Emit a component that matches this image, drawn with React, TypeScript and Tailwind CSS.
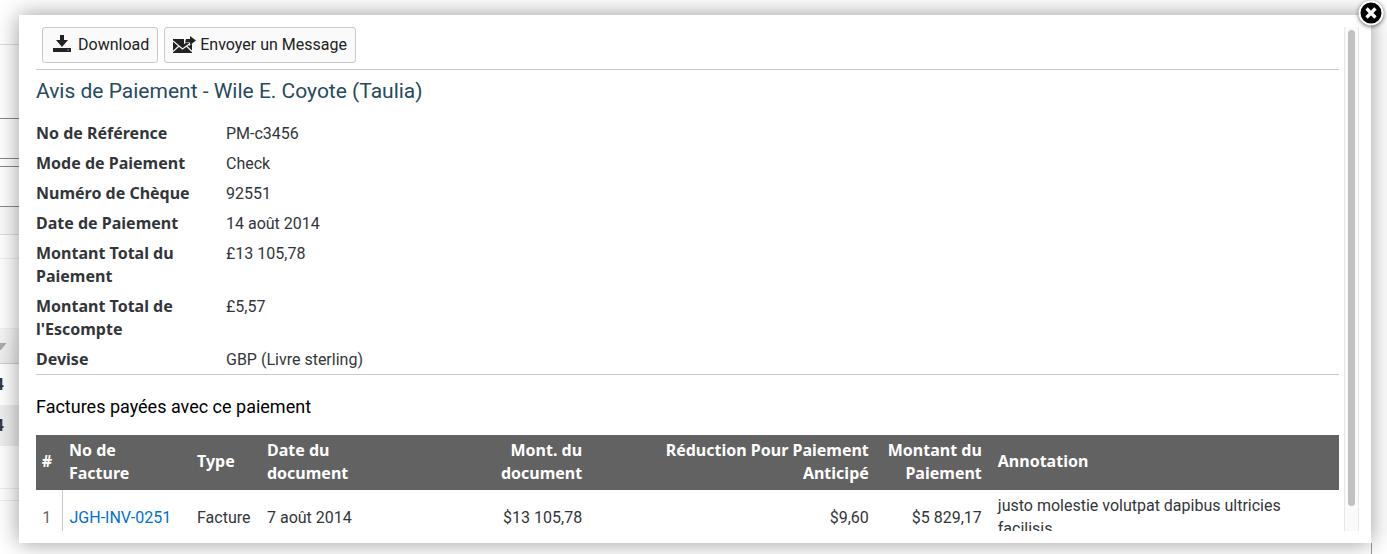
import React from "react";

type Field = { label: string; value: string };

const fields: Field[] = [
  { label: "No de Référence", value: "PM-c3456" },
  { label: "Mode de Paiement", value: "Check" },
  { label: "Numéro de Chèque", value: "92551" },
  { label: "Date de Paiement", value: "14 août 2014" },
  { label: "Montant Total du Paiement", value: "£13 105,78" },
  { label: "Montant Total de l'Escompte", value: "£5,57" },
  { label: "Devise", value: "GBP (Livre sterling)" },
];

function DownloadIcon() {
  return (
    <svg viewBox="0 0 24 18" className="h-[18px] w-6" fill="#222" aria-hidden="true">
      <path d="M9 0h4v5h4l-6 7-6-7h4z" />
      <path d="M2 13h18v4H2z" />
      <path d="M16 14.500h2v1h-2z" fill="#888" />
    </svg>
  );
}

function SendMailIcon() {
  return (
    <svg viewBox="0 0 24 18" className="h-[18px] w-6" aria-hidden="true">
      <path d="M0 4h19v14H0z" fill="#222" />
      <path d="M0 6 9.500 14 17 8.500M0 16.500 6 11M19 16.500 13.500 11" fill="none" stroke="#fafafa" strokeWidth="1.200" />
      <path d="M11 9V4h5V0l7.500 5.500L16 11V8h-3z" fill="#fafafa" />
      <path d="M12 7.500 13 4h4V1l6 4.500-6 4.500V7.500z" fill="#222" />
    </svg>
  );
}

function CloseIcon() {
  return (
    <svg viewBox="0 0 30 30" className="size-[30px]" aria-hidden="true">
      <circle cx="15" cy="15" r="11.500" fill="#000" stroke="#fff" strokeWidth="2" />
      <path d="m10.500 10.500 9 9m0-9-9 9" stroke="#fff" strokeWidth="3.200" />
    </svg>
  );
}

function ToolbarButton({ icon, children }: { icon: React.ReactNode; children: React.ReactNode }) {
  return (
    <button type="button" className="flex h-9 items-center gap-[3px] rounded-[3px] border border-[#c8c8c8] bg-[#fafafa] px-2 pb-[2px] text-[#222]">
      {icon}
      {children}
    </button>
  );
}

function PageBehind() {
  return (
    <div className="absolute inset-0 flex overflow-hidden bg-white" aria-hidden="true">
      <div className="flex w-[19px] flex-col">
        <div className="h-[45px] shrink-0 border-b border-[#ddd]" />
        <div className="h-[74px] shrink-0 border-b border-[#888]" />
        <div className="h-10 shrink-0 border-b border-[#888]" />
        <div className="h-2 shrink-0 border-b border-[#888]" />
        <div className="h-10 shrink-0 border-b border-[#888]" />
        <div className="h-7 shrink-0 border-b border-[#ddd] bg-[#fafafa]" />
        <div className="h-6 shrink-0 border-b border-[#f0f0f0]" />
        <div className="h-[70px] shrink-0 border-b border-[#f0f0f0]" />
        <div className="flex h-[35px] shrink-0 items-center border-b border-[#ccc] bg-linear-to-b from-[#f7f7f7] to-[#ececec]">
          <svg viewBox="0 0 7 7" className="size-[7px]">
            <path d="M0 0h6.500L1 7H0z" fill="#aaa" />
          </svg>
        </div>
        <div className="flex h-[41px] w-1 shrink-0 items-center justify-end overflow-hidden font-bold">4</div>
        <div className="flex h-[41px] shrink-0 bg-[#eee]">
          <div className="flex w-1 items-center justify-end overflow-hidden font-bold">4</div>
        </div>
        <div className="h-[43px] shrink-0 border-b border-[#eee]" />
        <div className="h-3 shrink-0 border-b border-[#eee]" />
      </div>
      <div className="flex grow flex-col justify-end pr-[15px]">
        <div className="h-[11px] border-r border-[#999]" />
      </div>
    </div>
  );
}

function InvoiceTable() {
  return (
    <table className="w-full table-fixed border-collapse">
      <colgroup>
        <col className="w-[26px]" />
        <col className="w-[127px]" />
        <col className="w-[70px]" />
        <col className="w-[12%]" />
        <col />
        <col className="w-[22%]" />
        <col className="w-[113px]" />
        <col className="w-[26.8%]" />
      </colgroup>
      <thead className="bg-[#626262] text-left font-['Noto_Sans',sans-serif] text-white">
        <tr className="h-[55px]">
          <th className="pr-1 pb-[2px] text-center">#</th>
          <th className="px-[7px] pb-[2px]">No de<br />Facture</th>
          <th className="px-2 pb-[2px]">Type</th>
          <th className="px-2 pb-[2px]">Date du<br />document</th>
          <th className="px-2 pb-[2px] text-right">Mont. du<br />document</th>
          <th className="px-2 pb-[2px] text-right">Réduction Pour Paiement<br />Anticipé</th>
          <th className="px-2 pb-[2px] text-right">Montant du<br />Paiement</th>
          <th className="px-2 pb-[2px]">Annotation</th>
        </tr>
      </thead>
      <tbody>
        <tr className="h-[55px]">
          <td className="border-r border-[#c8c8c8] pr-1 text-center text-[#666]">1</td>
          <td className="px-[7px]"><a href="#invoice" className="text-[#0070d2]">JGH-INV-0251</a></td>
          <td className="px-2">Facture</td>
          <td className="px-2">7 août 2014</td>
          <td className="px-2 text-right">$13 105,78</td>
          <td className="px-2 text-right">$9,60</td>
          <td className="px-2 text-right">$5 829,17</td>
          <td className="pr-8 pb-[2px] pl-2">justo molestie volutpat dapibus ultricies facilisis</td>
        </tr>
      </tbody>
    </table>
  );
}

export default function App() {
  return (
    <div className="relative h-screen overflow-hidden font-[Roboto,sans-serif] text-base leading-[23px] text-[#32363a]">
      <PageBehind />
      <div className="relative flex h-full pt-[15px] pr-4 pb-[11px] pl-[19px]">
        <div role="dialog" aria-label="Avis de Paiement" className="relative flex min-w-0 grow gap-[5px] bg-white py-3 pr-3 pl-[17px] shadow-[0_0_22px_rgba(0,0,0,0.4)]">
          <main className="min-w-0 grow overflow-y-auto [scrollbar-width:none]">
            <div className="flex gap-[6px] border-b border-[#c8c8c8] pb-[6px] pl-[6px]">
              <ToolbarButton icon={<DownloadIcon />}>Download</ToolbarButton>
              <ToolbarButton icon={<SendMailIcon />}>Envoyer un Message</ToolbarButton>
            </div>
            <h1 className="pt-[7px] text-[21px] leading-7 text-[#264a60]">Avis de Paiement - Wile E. Coyote (Taulia)</h1>
            <dl className="flex flex-col gap-[7px] border-b border-[#c8c8c8] pt-[17px] pb-[3px]">
              {fields.map((f) => (
                <div key={f.label} className="flex">
                  <dt className="w-[190px] shrink-0 pr-5 font-['Noto_Sans',sans-serif] font-bold">{f.label}</dt>
                  <dd>{f.value}</dd>
                </div>
              ))}
            </dl>
            <h2 className="pt-5 pb-4 text-lg leading-6 text-black">Factures payées avec ce paiement</h2>
            <InvoiceTable />
          </main>
          <div className="w-[15px] shrink-0 border-x border-[#e8e8e8] bg-[#fafafa] px-[3px] pt-[3px]">
            <div className="h-[95%] rounded-full bg-[#c1c1c1]" />
          </div>
          <button type="button" aria-label="Fermer" className="absolute -top-[17px] -right-[15px] rounded-full drop-shadow-[0_1px_2px_rgba(0,0,0,0.6)]">
            <CloseIcon />
          </button>
        </div>
      </div>
    </div>
  );
}
